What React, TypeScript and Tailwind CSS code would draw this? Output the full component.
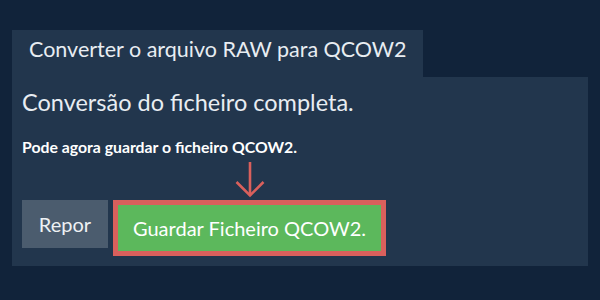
import React from 'react';

const DownArrow: React.FC = () => (
  <svg width="30" height="36" viewBox="0 0 30 36" className="block" fill="none">
    <path d="M15 0 V33.5" stroke="#d9605c" strokeWidth="2.6" />
    <path d="M1.5 20 L15 33.5 L28.5 20" stroke="#d9605c" strokeWidth="2.6" />
  </svg>
);

const App: React.FC = () => {
  return (
    <div
      className="w-[600px] h-[300px] bg-[#11233a] px-3 pt-[30px] text-white"
      style={{ fontFamily: 'Lato, "Noto Sans", sans-serif' }}
    >
      <div className="inline-block align-top bg-[#22364d] w-[411px] h-[47px] pl-[17px] pt-[6px] text-[21.5px] leading-[26px] text-[#e8edf2]">
        Converter o arquivo RAW para QCOW2
      </div>
      <div className="w-[576px] h-[189px] bg-[#22364d] px-[10px] pt-[10px]">
        <h1 className="text-[23.5px] leading-[30px] text-[#e8edf2]">Conversão do ficheiro completa.</h1>
        <p className="mt-[20px] text-[15.8px] leading-[20px] font-bold text-white">Pode agora guardar o ficheiro QCOW2.</p>
        <div className="flex justify-center w-[273px] ml-[91px] h-[43px] pt-[5px]">
          <DownArrow />
        </div>
        <div className="flex items-start gap-[5px]">
          <button className="w-[86px] h-[48px] bg-[#4b5c6e] text-[20px] text-[#eef1f4]">Repor</button>
          <div className="border-[5px] border-[#d9605c]">
            <button className="block w-[263px] h-[46px] bg-[#5cb85c] text-[20px] text-white">Guardar Ficheiro QCOW2.</button>
          </div>
        </div>
      </div>
    </div>
  );
};

export default App;
